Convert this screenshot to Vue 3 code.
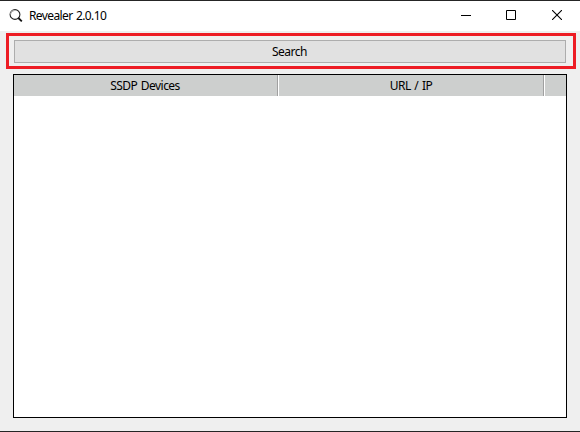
<script setup>
const columns = ['SSDP Devices', 'URL / IP', '']
</script>

<template>
  <main class="window">
    <header class="titlebar">
      <svg class="app-icon" width="14" height="14" viewBox="0 0 14 14">
        <circle cx="6" cy="5.5" r="4.9" fill="#fff" stroke="#222" stroke-width="1.1" />
        <path d="M1.6 5.2A4.4 4.4 0 0 1 5.3 1.3" fill="none" stroke="#aaa" stroke-width="1.2" />
        <path d="M9.4 9L12.8 12.3" stroke="#111" stroke-width="1.8" />
      </svg>
      <h1 class="title">Revealer 2.0.10</h1>
      <div class="controls">
        <svg width="10" height="10" viewBox="0 0 10 10"><path d="M0 5.5H10" stroke="#000" /></svg>
        <svg width="10" height="10" viewBox="0 0 10 10"><path d="M.5 .5H9.5V9.5H.5Z" fill="none" stroke="#000" /></svg>
        <svg class="close" width="10" height="10" viewBox="0 0 10 10"><path d="M0 0L10 10M10 0L0 10" stroke="#000" stroke-width="1.1" /></svg>
      </div>
    </header>
    <div class="highlight">
      <button class="search"><span>Search</span></button>
    </div>
    <section class="devices">
      <div class="head">
        <div v-for="(name, i) in columns" :key="i" class="cell"><span>{{ name }}</span></div>
      </div>
    </section>
  </main>
</template>

<style>
body { margin: 0; }
</style>

<style scoped>
.window {
  box-sizing: border-box;
  width: 580px;
  height: 432px;
  display: flex;
  flex-direction: column;
  background: #efefef;
  border-top: 1px solid #252525;
  border-bottom: 1px solid #252525;
  font-family: "Noto Sans", "Open Sans", sans-serif;
  font-size: 12px;
  color: #000;
}
.titlebar {
  box-sizing: border-box;
  height: 30px;
  flex: none;
  display: flex;
  align-items: center;
  padding: 0 18px 0 9px;
  background: #fff;
}
.app-icon { flex: none; }
.title {
  margin: 0 0 0 6px;
  font-size: 12px;
  font-weight: 400;
  line-height: 16px;
  letter-spacing: -0.6px;
  word-spacing: 0.8px;
  white-space: nowrap;
}
.controls {
  display: flex;
  gap: 35px;
  margin-left: auto;
  padding-bottom: 2px;
}
.controls svg { display: block; }
.controls .close { margin-left: 1px; }
.highlight {
  box-sizing: border-box;
  height: 36px;
  flex: none;
  margin: 2px 4px 0 6px;
  padding: 4px 7px 3px 5px;
  border: 3px solid #ed1c24;
  display: flex;
}
.search {
  box-sizing: border-box;
  flex: 1;
  height: 23px;
  padding: 0 1px 0 0;
  border: 1px solid #adadad;
  background: #e1e1e1;
  font: inherit;
  line-height: 21px;
  letter-spacing: -0.5px;
  color: #000;
}
.devices {
  box-sizing: border-box;
  height: 344px;
  margin: 5px 13px 0;
  border: 1px solid #000;
  background: #fff;
}
.head {
  display: grid;
  grid-template-columns: 264px 266px 1fr;
  height: 21px;
  background: #cdcfce;
}
.cell {
  box-sizing: border-box;
  text-align: center;
  line-height: 21px;
  letter-spacing: -0.55px;
  word-spacing: 1.1px;
  white-space: nowrap;
  border-left: 1px solid #fff;
  border-right: 1px solid #a0a0a0;
}
.cell:first-child { border-left: 0; padding-right: 1px; }
.cell:last-child { border-right: 0; }
</style>
